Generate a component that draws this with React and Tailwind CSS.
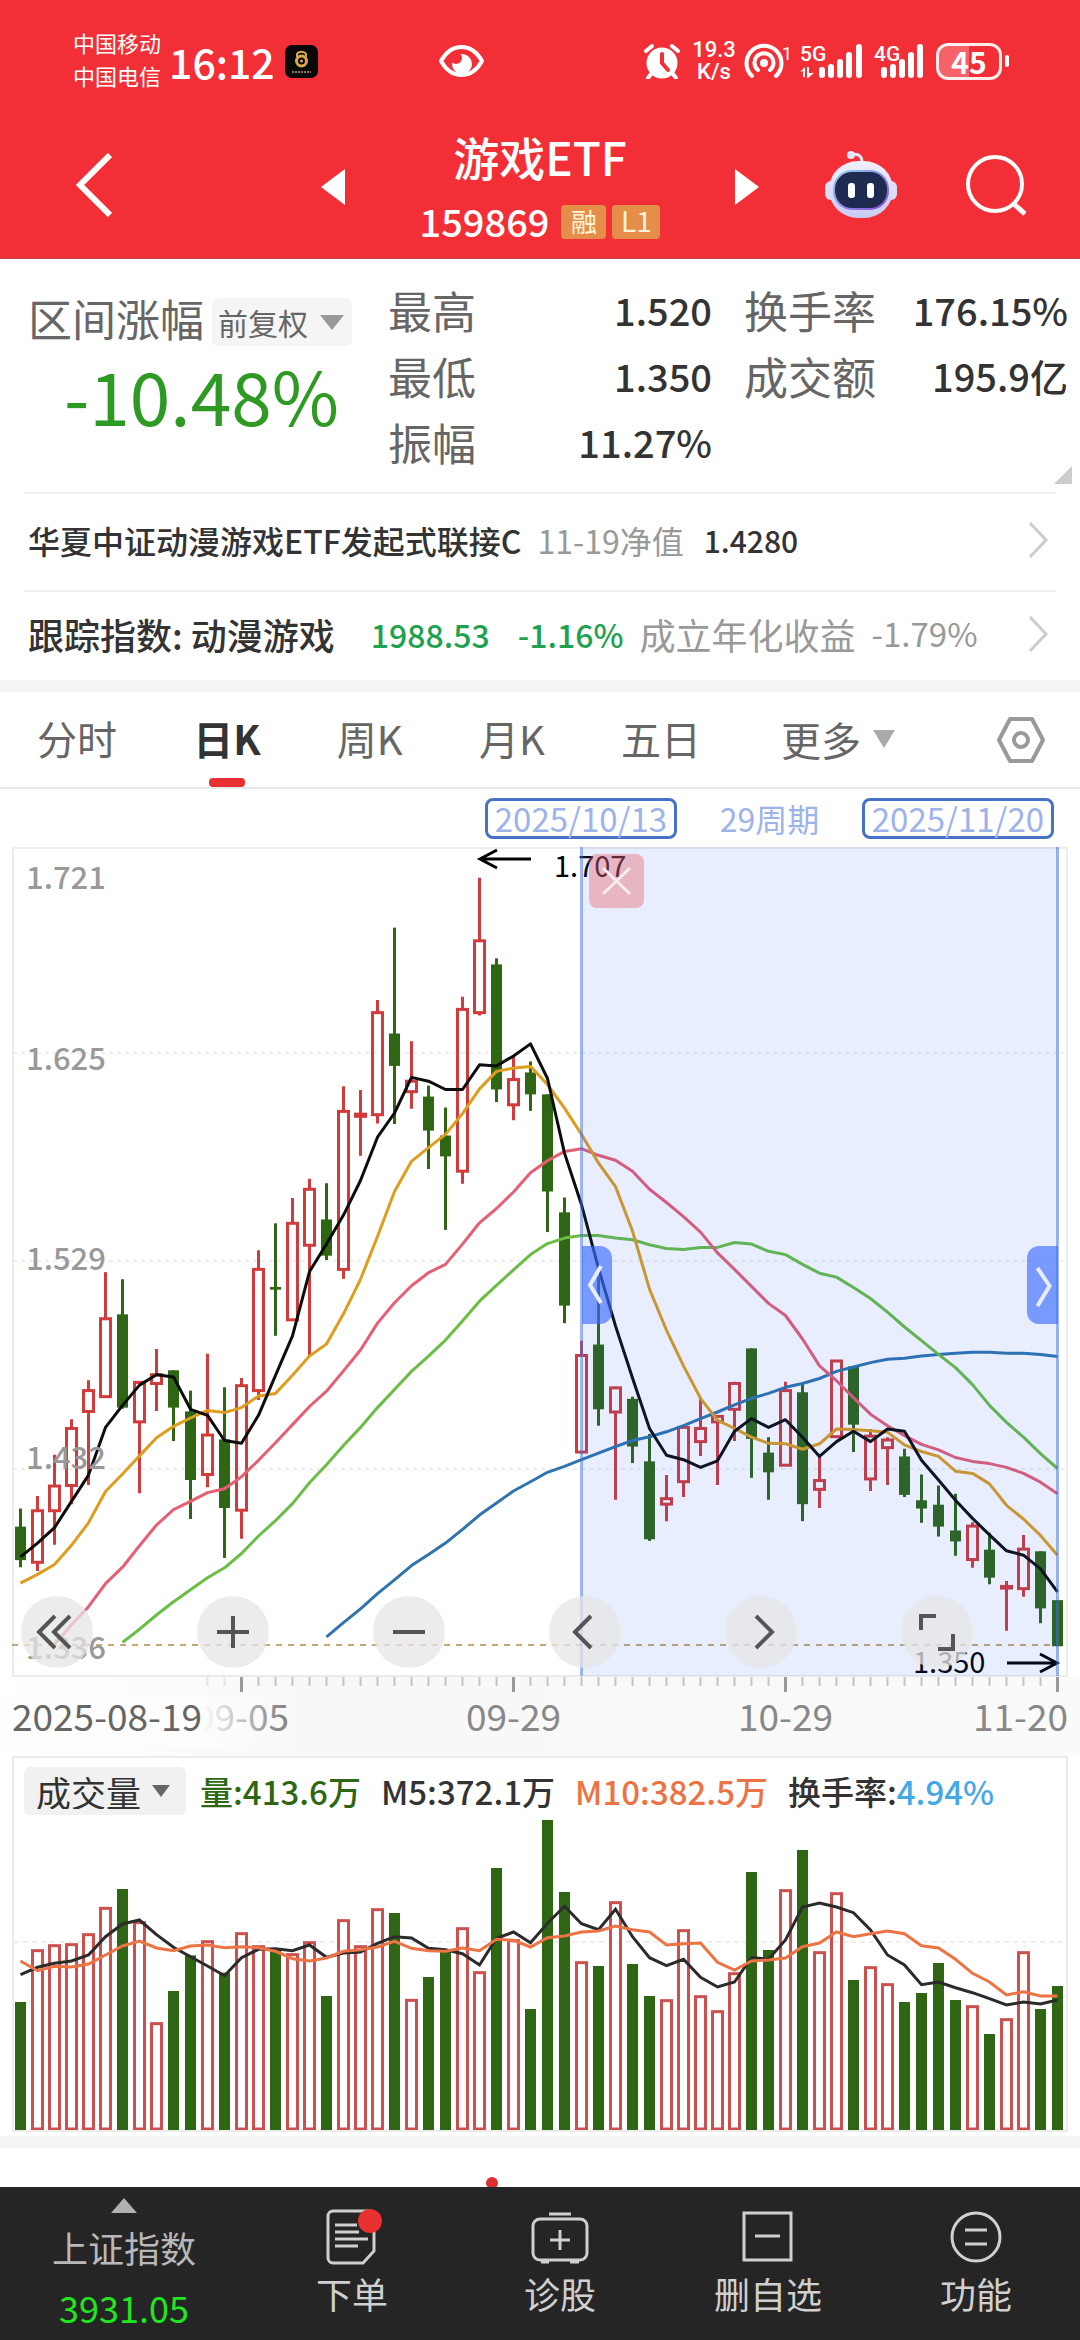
import React, { useState } from "react";

// [direction, high, body top, body bottom, low], measured down from the top of the plot
const candles = [
    ["d", 1218, 1251, 1312, 1325], ["u", 1195, 1222, 1316, 1332], ["u", 1120, 1177, 1222, 1284], ["u", 1055, 1072, 1176, 1210],
    ["u", 984, 1003, 1041, 1175], ["u", 787, 872, 1014, 1014], ["d", 800, 864, 1034, 1036], ["u", 986, 988, 1060, 1190],
    ["u", 927, 974, 990, 1040], ["d", 966, 966, 1034, 1095], ["d", 1003, 1041, 1166, 1237], ["u", 936, 1084, 1156, 1179],
    ["d", 997, 1092, 1217, 1308], ["u", 980, 994, 1221, 1273], ["u", 747, 782, 1003, 1020], ["d", 698, 814, 819, 903],
    ["u", 652, 698, 874, 876], ["u", 617, 636, 738, 938], ["d", 625, 691, 757, 765], ["u", 448, 494, 782, 799],
    ["u", 455, 499, 503, 575], ["u", 291, 314, 500, 516], ["d", 159, 352, 411, 517], ["u", 366, 439, 458, 489],
    ["d", 447, 467, 529, 599], ["d", 487, 538, 576, 710], ["u", 285, 308, 603, 626], ["u", 68, 183, 314, 319],
    ["d", 215, 226, 454, 477], ["u", 394, 436, 482, 510], ["d", 403, 423, 463, 493], ["d", 463, 463, 640, 714],
    ["d", 651, 678, 848, 880], ["u", 912, 939, 1115, 1117], ["d", 795, 919, 1037, 1067], ["u", 996, 998, 1042, 1202],
    ["d", 1014, 1018, 1105, 1135], ["d", 1082, 1132, 1274, 1277], ["u", 1157, 1200, 1210, 1241], ["u", 1068, 1070, 1169, 1197],
    ["u", 1016, 1072, 1096, 1122], ["u", 1048, 1050, 1060, 1175], ["u", 987, 990, 1037, 1095], ["d", 926, 926, 1091, 1162],
    ["d", 1088, 1116, 1152, 1202], ["u", 987, 1003, 1139, 1140], ["d", 991, 1006, 1210, 1241], ["u", 1122, 1167, 1183, 1217],
    ["u", 947, 949, 1087, 1088], ["d", 958, 959, 1065, 1115], ["u", 1073, 1086, 1164, 1186], ["u", 1088, 1093, 1107, 1175],
    ["d", 1109, 1123, 1193, 1197], ["d", 1156, 1203, 1218, 1244], ["d", 1176, 1211, 1251, 1269], ["d", 1191, 1258, 1278, 1304],
    ["u", 1243, 1250, 1311, 1326], ["d", 1262, 1293, 1344, 1356], ["u", 1350, 1360, 1363, 1441], ["u", 1266, 1292, 1364, 1379],
    ["d", 1296, 1296, 1400, 1427], ["d", 1385, 1385, 1469, 1469],
];

const averages = [
    {
        color: "#2f74ae", start: 18,
        values: [1452, 1426, 1401, 1373, 1348, 1322, 1302, 1281, 1256, 1230, 1208, 1186, 1169, 1152, 1141, 1129, 1117, 1105, 1094, 1087, 1078, 1067, 1054, 1042, 1029, 1017, 1008, 997, 990, 981, 968, 960, 952, 946, 944, 940, 937, 935, 933, 933, 935, 935, 937, 941],
    },
    {
        color: "#6abd45", start: 6,
        values: [1462, 1438, 1412, 1388, 1366, 1344, 1326, 1300, 1268, 1240, 1209, 1171, 1138, 1103, 1070, 1034, 1001, 968, 940, 911, 876, 840, 811, 783, 755, 735, 725, 720, 720, 725, 728, 737, 744, 746, 742, 742, 733, 736, 749, 755, 773, 789, 796, 815, 835, 860, 887, 912, 937, 961, 992, 1030, 1061, 1088, 1118, 1145],
    },
    {
        color: "#e65f74", start: 2,
        values: [1466, 1430, 1397, 1355, 1325, 1286, 1248, 1220, 1205, 1189, 1182, 1160, 1130, 1098, 1065, 1032, 1004, 967, 929, 880, 843, 812, 788, 773, 736, 697, 671, 641, 606, 584, 567, 562, 574, 583, 603, 636, 660, 686, 714, 752, 782, 813, 844, 866, 909, 958, 985, 1016, 1046, 1067, 1085, 1101, 1111, 1125, 1132, 1136, 1143, 1154, 1170, 1191],
    },
    {
        color: "#dd9d1f", start: 0,
        values: [1354, 1338, 1320, 1285, 1244, 1187, 1155, 1122, 1089, 1068, 1053, 1039, 1043, 1034, 1013, 1008, 975, 940, 918, 863, 800, 722, 640, 585, 560, 536, 498, 453, 421, 415, 412, 445, 488, 536, 588, 631, 712, 818, 893, 958, 1017, 1057, 1072, 1088, 1099, 1100, 1110, 1100, 1073, 1074, 1076, 1079, 1102, 1114, 1123, 1150, 1154, 1173, 1212, 1237, 1267, 1303],
    },
    {
        color: "#0d0d0d", start: 0,
        values: [1306, 1281, 1253, 1205, 1157, 1070, 1030, 993, 974, 978, 1037, 1048, 1094, 1099, 1048, 975, 903, 786, 736, 683, 620, 541, 497, 432, 439, 454, 454, 409, 411, 393, 371, 434, 570, 664, 780, 885, 980, 1072, 1121, 1129, 1143, 1131, 1077, 1054, 1070, 1056, 1088, 1123, 1096, 1077, 1096, 1073, 1077, 1130, 1166, 1203, 1236, 1266, 1295, 1303, 1328, 1370],
    },
];

const volumes = [666, 509, 494, 491, 461, 382, 327, 425, 728, 633, 526, 482, 578, 458, 497, 509, 521, 485, 648, 419, 497, 386, 399, 658, 591, 513, 443, 575, 264, 479, 687, 120, 336, 545, 558, 365, 552, 648, 659, 449, 647, 692, 578, 276, 510, 329, 210, 515, 338, 600, 560, 611, 666, 639, 549, 660, 677, 762, 716, 515, 687, 618];
const volumeM5 = [584, 562, 550, 543, 525, 470, 432, 420, 464, 502, 530, 558, 587, 533, 508, 506, 512, 495, 532, 519, 516, 490, 470, 474, 505, 509, 521, 555, 475, 456, 488, 430, 379, 431, 449, 388, 470, 533, 557, 538, 592, 621, 606, 533, 538, 480, 381, 369, 381, 398, 450, 525, 555, 614, 606, 623, 638, 656, 675, 666, 672, 660];
const volumeM10 = [543, 572, 559, 561, 552, 525, 498, 483, 504, 512, 498, 495, 503, 500, 503, 514, 536, 543, 534, 514, 509, 501, 484, 505, 512, 514, 504, 512, 478, 481, 501, 473, 468, 456, 453, 438, 449, 456, 495, 491, 489, 547, 570, 543, 540, 534, 500, 489, 456, 470, 461, 453, 461, 497, 504, 538, 580, 606, 645, 635, 648, 648];

const UP = "#d23b3b";
const DOWN = "#2f6614";

const xAt = (i) => 20.5 + i * 17;
const priceY = (v) => (v - 12) / 1.823;
const volumeY = (v) => v / 3 - 36;

const toPoints = (values, y, start = 0) =>
    values.map((v, i) => `${xAt(i + start)},${y(v).toFixed(1)}`).join(" ");

const Dropdown = ({ label, options, className, arrowClass }) => (
    <span className="relative inline-flex items-center">
        <select aria-label={label} className={`appearance-none outline-none ${className}`}>
            {options.map((o) => <option key={o}>{o}</option>)}
        </select>
        <svg className={`absolute pointer-events-none ${arrowClass}`} viewBox="0 0 20 14" preserveAspectRatio="none" fill="currentColor">
            <path d="M0 0h20L10 14z" />
        </svg>
    </span>
);

const Signal = ({ name, bars, arrows, width }) => (
    <svg width={width} height="40" viewBox={`0 0 ${width} 40`} fill="white">
        <text x="0" y="20" fontSize="21" fontWeight="500" fontFamily="Roboto, sans-serif">{name}</text>
        {arrows && <path d="M0 31l5-5v10H3v-6zM7 26h2v6h5l-6 5h-1z" />}
        {bars.map(([x, h]) => <rect key={x} x={x} y={37 - h} width="6" height={h} rx="3" />)}
    </svg>
);

const StatusBar = () => (
    <div className="flex items-center h-[122px] mb-0.5 pl-[73px] pr-[71px] text-white">
        <div className="pb-1 text-[22px] leading-[33px]">
            <p>中国移动</p>
            <p>中国电信</p>
        </div>
        <p className="ml-2 text-[41px] leading-[48px] font-medium">16:12</p>
        <svg className="ml-2.5 w-[33px] h-[33px]" viewBox="0 0 33 33">
            <rect width="33" height="33" rx="7" fill="#080808" />
            <path d="M12 12V9a5 4 0 0 1 9 0v3" fill="none" stroke="#d6a84e" strokeWidth="2" />
            <circle cx="16.500" cy="16" r="5" fill="none" stroke="#d6a84e" strokeWidth="3" />
            <circle cx="16.500" cy="16" r="1.500" fill="#d6a84e" />
            <path d="M7 27h19" stroke="#8a7a58" strokeWidth="2" strokeDasharray="2 1" />
        </svg>
        <svg className="ml-30 w-[47px] h-8" viewBox="0 0 47 32" fill="none" stroke="white" strokeWidth="4">
            <path d="M3 16C8 7 15 2 23.500 2S39 7 44 16c-5 9-12 14-20.500 14S8 25 3 16z" strokeLinejoin="round" />
            <circle cx="24" cy="19" r="10" fill="white" stroke="none" />
            <circle cx="18" cy="13" r="6" fill="#f22f37" stroke="none" />
        </svg>
        <div className="flex items-center ml-auto">
            <svg className="w-9 h-9" viewBox="0 0 36 36" fill="white">
                <circle cx="18" cy="20" r="15.500" />
                <path d="M2 8l6-5M34 8l-6-5M7 31l-3 4M29 31l3 4" stroke="white" strokeWidth="4" strokeLinecap="round" />
                <path d="M18 11v9l6 7" fill="none" stroke="#f22f37" strokeWidth="4" strokeLinecap="round" strokeLinejoin="round" />
            </svg>
            <div className="ml-3 w-11 text-center font-['Roboto',sans-serif] text-[22px] leading-[22px] font-medium">
                <p>19.3</p>
                <p>K/s</p>
            </div>
            <svg className="ml-2 w-13 h-10" viewBox="0 0 52 40" fill="none" stroke="white" strokeWidth="4" strokeLinecap="round">
                <path d="M8 35a17.500 17.500 0 1 1 24 0" />
                <path d="M14 29a9.500 9.500 0 1 1 12 0" />
                <circle cx="20" cy="22" r="4" fill="white" stroke="none" />
                <text x="38" y="19" fontSize="18" fill="white" stroke="none" fontFamily="Roboto, sans-serif">1</text>
            </svg>
            <div className="flex ml-1 gap-[11px]">
                <Signal name="5G" arrows width={63} bars={[[19, 11], [28, 14], [37, 19], [46, 26], [56, 34]]} />
                <Signal name="4G" width={50} bars={[[7, 11], [16, 14], [25, 19], [34, 26], [43, 34]]} />
            </div>
            <div className="ml-3 w-[66px] h-[37px] rounded-xl border-[3px] border-white/90 text-center text-[30px] leading-[30px] font-bold bg-linear-to-r from-white/25 from-50% to-transparent to-50%">
                45
            </div>
            <span className="ml-[3px] w-1 h-3 rounded-full bg-white" />
        </div>
    </div>
);

const Robot = () => (
    <svg className="w-[72px] h-[68px]" viewBox="0 0 72 68">
        <defs>
            <linearGradient id="shell" x1="0" y1="0" x2="0" y2="1">
                <stop offset="0" stopColor="#f1effc" />
                <stop offset="1" stopColor="#c9cbf2" />
            </linearGradient>
            <linearGradient id="visor" x1="0" y1="0" x2="1" y2="1">
                <stop offset="0" stopColor="#8fd5ef" />
                <stop offset="1" stopColor="#8447dd" />
            </linearGradient>
        </defs>
        <path d="M26 4c7-2 11 1 11 7" fill="none" stroke="#e7e3f8" strokeWidth="3" />
        <circle cx="26" cy="4" r="4" fill="#e7e3f8" />
        <rect x="0" y="30" width="12" height="19" rx="6" fill="#dedff6" />
        <rect x="60" y="30" width="12" height="19" rx="6" fill="#dedff6" />
        <rect x="4" y="10" width="64" height="57" rx="29" fill="url(#shell)" />
        <rect x="8" y="19" width="56" height="40" rx="19" fill="url(#visor)" />
        <rect x="10" y="21" width="52" height="36" rx="17" fill="#1f2a50" />
        <rect x="23" y="32" width="7" height="15" rx="3" fill="white" />
        <rect x="42" y="32" width="7" height="15" rx="3" fill="white" />
    </svg>
);

const Header = () => (
    <header className="bg-[#f22f37]">
        <StatusBar />
        <div className="grid grid-cols-[1fr_438px_1fr] h-[135px] text-white border-b border-[#b54a50]">
            <div className="flex items-center h-[122px] pl-[76px]">
                <button aria-label="返回">
                    <svg className="w-9 h-16" viewBox="0 0 36 64" fill="none" stroke="white" strokeWidth="6"><path d="M34 2L4 32l30 30" /></svg>
                </button>
            </div>
            <div className="flex justify-between">
                <button aria-label="上一只" className="h-[126px]">
                    <svg className="w-6 h-9" viewBox="0 0 24 36" fill="white"><path d="M24 0v36L0 18z" /></svg>
                </button>
                <div className="text-center">
                    <h1 className="text-[46px] leading-[64px] font-medium">游戏ETF</h1>
                    <div className="flex items-center gap-1.5 h-[68px]">
                        <span className="mr-1.5 pb-0.5 text-[38px] leading-none font-medium">159869</span>
                        <span className="w-[45px] h-[34px] rounded bg-[#e48e4a] text-[#fff6da] text-[26px] leading-[31px]">融</span>
                        <span className="w-12 h-[34px] rounded bg-[#e48e4a] text-[#fff6da] text-[28px] leading-[31px]">L1</span>
                    </div>
                </div>
                <button aria-label="下一只" className="h-[126px]">
                    <svg className="w-6 h-9" viewBox="0 0 24 36" fill="white"><path d="M0 0v36l24-18z" /></svg>
                </button>
            </div>
            <div className="flex items-center justify-between h-[122px] pl-[66px] pr-[54px]">
                <button aria-label="智能助手"><Robot /></button>
                <button aria-label="搜索">
                    <svg className="w-[60px] h-[62px]" viewBox="0 0 60 62" fill="none" stroke="white" strokeWidth="4">
                        <circle cx="29" cy="30" r="27" />
                        <path d="M48 50l11 10" strokeWidth="5" />
                    </svg>
                </button>
            </div>
        </div>
    </header>
);

const Stat = ({ name, value }) => (
    <div className="flex justify-between items-center h-[66px]">
        <dt className="text-[44px] leading-none text-[#666]">{name}</dt>
        <dd className="text-[38px] leading-none font-medium text-[#333]">{value}</dd>
    </div>
);

const Summary = () => (
    <section className="relative flex h-[233px] pl-7 pr-3 pt-[18px]">
        <div className="w-[360px] pt-[18px]">
            <div className="flex items-center gap-2 h-[54px]">
                <h2 className="pb-2 text-[44px] leading-none text-[#666]">区间涨幅</h2>
                <Dropdown label="复权方式" options={["前复权", "后复权", "不复权"]}
                    className="w-[140px] h-12 pl-1.5 rounded-md bg-[#f5f5f5] text-[30px] text-[#666]"
                    arrowClass="right-2 w-6 h-[15px] text-[#999]" />
            </div>
            <p className="mt-1.5 pl-9 text-[73px] leading-[78px] text-[#2f9a23]">-10.48%</p>
        </div>
        <div className="flex-1 flex gap-8">
            <dl className="flex-1">
                <Stat name="最高" value="1.520" />
                <Stat name="最低" value="1.350" />
                <Stat name="振幅" value="11.27%" />
            </dl>
            <dl className="flex-1">
                <Stat name="换手率" value="176.15%" />
                <Stat name="成交额" value="195.9亿" />
            </dl>
        </div>
        <svg className="absolute right-2 bottom-2 w-[18px] h-[18px]" viewBox="0 0 18 18"><path d="M18 0v18H0z" fill="#ccc" /></svg>
    </section>
);

const LinkRow = ({ children }) => (
    <a href="#" className="flex items-center mx-6 pl-1 pr-2 pb-1 border-t-2 border-[#eee] whitespace-nowrap">
        {children}
        <svg className="ml-auto w-5 h-9" viewBox="0 0 20 36" fill="none" stroke="#ccc" strokeWidth="3"><path d="M2 1l16 17L2 35" /></svg>
    </a>
);

const tabs = ["分时", "日K", "周K", "月K", "五日"];

const Tabs = () => {
    const [active, setActive] = useState("日K");

    return (
        <nav className="flex items-center h-[97px] pl-[37px] pr-[35px] border-b-2 border-[#e8e8e8] text-[40px] text-[#666]">
            <div className="flex flex-1 justify-between max-w-[664px] h-full">
                {tabs.map((t) => (
                    <button key={t} onClick={() => setActive(t)}
                        className={`relative h-full pb-1 cursor-pointer ${t === active ? "font-bold text-[#333]" : ""}`}>
                        {t}
                        {t === active && <span className="absolute bottom-0 left-1/2 -ml-[18px] w-9 h-[9px] rounded bg-[#e83030]" />}
                    </button>
                ))}
            </div>
            <div className="ml-20 pb-0.5">
                <Dropdown label="更多周期" options={["更多"]} className="w-[114px]" arrowClass="right-0 w-[22px] h-[18px] text-[#aaa]" />
            </div>
            <button aria-label="设置" className="ml-auto">
                <svg className="w-12 h-12" viewBox="0 0 48 48" fill="none" stroke="#999" strokeWidth="4" strokeLinejoin="round">
                    <path d="M13 3h22l11 21-11 21H13L2 24z" />
                    <circle cx="24" cy="24" r="7" />
                </svg>
            </button>
        </nav>
    );
};

const RangeBar = () => (
    <div className="flex items-center justify-end h-[58px] pr-[26px] text-[33px] leading-none text-[#9db3ea]">
        <button className="w-[192px] h-[41px] rounded-lg border-[3px] border-[#4672c8] leading-[33px]">2025/10/13</button>
        <span className="w-[185px] text-center text-[32px]">29周期</span>
        <button className="w-[192px] h-[41px] rounded-lg border-[3px] border-[#4672c8] leading-[33px]">2025/11/20</button>
    </div>
);

const gridLines = [206, 414, 622];
const priceLabels = [["1.721", 42], ["1.625", 223], ["1.529", 423], ["1.432", 622], ["1.336", 812]];
const dateLabels = [["09-05", 13], ["09-29", 29], ["10-29", 45]];

const toolIcons = [
    { name: "更早", d: "M34 20L18 36l16 16M49 20L33 36l16 16" },
    { name: "放大", d: "M20 36h32M36 20v32" },
    { name: "缩小", d: "M20 36h32" },
    { name: "左移", d: "M42 20L26 36l16 16" },
    { name: "右移", d: "M31 20l16 16-16 16" },
    { name: "全屏", d: "M20 34V20h15M52 38v15H37" },
];

const Candle = ({ data, i }) => {
    const [dir, high, top, bottom, low] = data;
    const x = xAt(i);
    if (dir === "d") {
        return (
            <g fill={DOWN}>
                <rect x={x - 1.5} y={priceY(high)} width="3" height={priceY(low) - priceY(high)} />
                <rect x={x - 5.5} y={priceY(top)} width="11" height={priceY(bottom) - priceY(top)} />
            </g>
        );
    }
    return (
        <g stroke={UP} strokeWidth="3" fill="none">
            <path d={`M${x} ${priceY(high)}V${priceY(top)}M${x} ${priceY(bottom)}V${priceY(low)}`} />
            <rect x={x - 5} y={priceY(top)} width="10" height={priceY(bottom) - priceY(top)} />
        </g>
    );
};

const PriceChart = () => (
    <div className="relative">
        <svg className="block w-full" viewBox="0 0 1080 909" fontFamily="'Noto Sans CJK SC', sans-serif">
            <defs>
                <linearGradient id="axisBg" x1="0" y1="0" x2="1" y2="0">
                    <stop offset="0" stopColor="#fff" />
                    <stop offset="0.3" stopColor="#f8f8f8" />
                    <stop offset="1" stopColor="#fafafa" />
                </linearGradient>
                <linearGradient id="fade" x1="0" y1="0" x2="1" y2="0">
                    <stop offset="0.72" stopColor="#fdfdfd" />
                    <stop offset="1" stopColor="#fdfdfd" stopOpacity="0" />
                </linearGradient>
            </defs>
            <rect x="0" y="830" width="1080" height="79" fill="url(#axisBg)" />
            <rect x="13" y="1" width="1054" height="828" fill="#fff" stroke="#ececec" strokeWidth="2" />
            {gridLines.map((y) => (
                <path key={y} d={`M13 ${y}H1066`} stroke="#e0e0e0" strokeWidth="1" strokeDasharray="4 4" />
            ))}
            <path d="M12 798H1066" stroke="#c5a675" strokeWidth="2" strokeDasharray="6 6" />

            {candles.map((c, i) => <Candle key={i} data={c} i={i} />)}
            {averages.map((a) => (
                <polyline key={a.color} points={toPoints(a.values, priceY, a.start)} fill="none" stroke={a.color} strokeWidth="3" strokeLinejoin="round" />
            ))}

            <g fontSize="31" fontWeight="500" fill="#999">
                {priceLabels.map(([t, y]) => <text key={t} x="26" y={y}>{t}</text>)}
            </g>
            <g fontSize="29" fill="#000">
                <text x="554" y="30">1.707</text>
                <text x="913" y="826">1.350</text>
            </g>
            <g fill="none" stroke="#000" strokeWidth="3">
                <path d="M531 12H480M497 3L480 12l17 9" />
                <path d="M1007 816h50M1040 807l17 9-17 9" />
            </g>

            <rect x="582" y="0" width="476" height="829" fill="#1e55fa" fillOpacity="0.1" />
            <path d="M581.500 0V829M1057.500 0V829" stroke="#4070e0" strokeOpacity="0.5" strokeWidth="3" />

            {candles.map((_, i) => {
                const major = i % 16 === 13;
                return i >= 11 && (
                    <path key={i} d={`M${xAt(i)} 830v${major ? 15 : 9}`} stroke={major ? "#999" : "#c4c4c4"} strokeOpacity={i < 13 ? 0.4 : 1} strokeWidth={major ? 3 : 2} />
                );
            })}
            <g fontSize="37" fill="#888">
                {dateLabels.map(([t, i]) => <text key={t} x={xAt(i)} y="884" textAnchor="middle">{t}</text>)}
                <text x="1068" y="884" textAnchor="end">11-20</text>
                <rect x="0" y="850" width="280" height="50" fill="url(#fade)" />
                <text x="12" y="884" fill="#666">2025-08-19</text>
            </g>
        </svg>

        <button aria-label="关闭区间统计" className="absolute left-[589px] top-[7px] w-[55px] h-[54px] rounded-lg bg-[#e8606c]/40">
            <svg className="w-full h-full" viewBox="0 0 55 54" fill="none" stroke="#f8eeee" strokeWidth="3"><path d="M14 14l27 26M41 14L14 40" /></svg>
        </button>
        <button aria-label="区间起点" className="absolute left-[582px] top-[399px] w-[30px] h-[78px] rounded-r-xl bg-[#3c6cff]/65">
            <svg className="w-full h-full" viewBox="0 0 30 78" fill="none" stroke="#e8eeff" strokeWidth="4"><path d="M19 20L8 39l11 18" /></svg>
        </button>
        <button aria-label="区间终点" className="absolute right-[22px] top-[399px] w-[31px] h-[78px] rounded-l-xl bg-[#3c6cff]/65">
            <svg className="w-full h-full" viewBox="0 0 30 78" fill="none" stroke="#e8eeff" strokeWidth="4"><path d="M10 22l12 18-12 20" /></svg>
        </button>

        <div className="absolute left-[21px] top-[749px] flex gap-[104px]">
            {toolIcons.map((t) => (
                <button key={t.name} aria-label={t.name} className="w-[72px] h-[72px] rounded-full bg-[#e6e6e6]/75">
                    <svg viewBox="0 0 72 72" fill="none" stroke="#555" strokeWidth="4"><path d={t.d} /></svg>
                </button>
            ))}
        </div>
    </div>
);

const VolumeChart = () => (
    <section className="mx-3 mb-1 border-2 border-[#ececec]">
        <div className="flex items-center gap-5 h-[58px] pt-2 pl-2.5 text-[33px] leading-none font-medium whitespace-nowrap text-[#333]">
            <Dropdown label="指标" options={["成交量", "MACD", "KDJ"]}
                className="w-[162px] h-12 pl-3 rounded-md bg-[#f1f1f1] text-[35px] font-normal"
                arrowClass="right-4 w-[18px] h-3 text-[#666]" />
            <span className="-ml-1.5 text-[#2f6614]">量:413.6万</span>
            <span>M5:372.1万</span>
            <span className="text-[#ec7444]">M10:382.5万</span>
            <span>换手率:<span className="text-[#45a8e6]">4.94%</span></span>
        </div>
        <svg className="block w-full" viewBox="14 0 1052 314">
            <path d="M14 126H1066" stroke="#ddd" strokeWidth="1" strokeDasharray="5 4" />
            {volumes.map((v, i) => {
                const y = volumeY(v);
                return candles[i][0] === "d"
                    ? <rect key={i} x={xAt(i) - 5.5} y={y} width="11" height={314 - y} fill={DOWN} />
                    : <rect key={i} x={xAt(i) - 5} y={y + 1} width="10" height={312 - y} fill="none" stroke="#cc5050" strokeWidth="3" />;
            })}
            <polyline points={toPoints(volumeM5, volumeY)} fill="none" stroke="#2b2b2b" strokeWidth="3" />
            <polyline points={toPoints(volumeM10, volumeY)} fill="none" stroke="#ec7444" strokeWidth="3" />
        </svg>
    </section>
);

const NavItem = ({ label, dot, children }) => (
    <button className="flex-1 flex flex-col items-center pt-[18px]">
        <span className="relative">
            <svg className="w-[60px] h-[60px]" viewBox="0 0 60 60" fill="none" stroke="#d0d0d0" strokeWidth="3">{children}</svg>
            {dot && <span className="absolute right-0 top-1 w-6 h-6 rounded-full bg-[#e83030]" />}
        </span>
        <span className="mt-2.5 text-[36px] leading-9">{label}</span>
    </button>
);

const BottomNav = () => (
    <nav className="mt-auto flex h-[153px] bg-[#252525] text-[#d0d0d0]">
        <button className="w-[248px] flex flex-col items-center pt-[11px]">
            <svg className="w-[26px] h-[15px]" viewBox="0 0 26 15" fill="#b0b0b0"><path d="M13 0l13 15H0z" /></svg>
            <span className="mt-3.5 text-[36px] leading-10 text-[#b8b8b8]">上证指数</span>
            <span className="mt-5 text-[36px] leading-10 text-[#1fe61f]">3931.05</span>
        </button>
        <NavItem label="下单" dot>
            <path d="M11 6h37a4 4 0 0 1 4 4v36L41 58H11a5 5 0 0 1-5-5V11a5 5 0 0 1 5-5z" />
            <path d="M13 20h22M13 27h24M13 34h33M13 41h23" />
        </NavItem>
        <NavItem label="诊股">
            <rect x="3" y="14" width="54" height="41" rx="7" />
            <path d="M19 9h22M30 25v20M20 35h20M11 57h8M40 57h9" />
        </NavItem>
        <NavItem label="删自选">
            <rect x="6" y="8" width="47" height="47" />
            <path d="M17 31h25" />
        </NavItem>
        <NavItem label="功能">
            <circle cx="30" cy="32" r="24" />
            <path d="M19 25h22M19 39h22" />
        </NavItem>
    </nav>
);

const App = () => (
    <div className="flex flex-col min-h-screen bg-white font-['Noto_Sans_CJK_SC',sans-serif]">
        <Header />
        <Summary />
        <LinkRow>
            <span className="text-[32px] leading-[92px] font-medium text-[#333]">华夏中证动漫游戏ETF发起式联接C</span>
            <span className="ml-4 text-[32px] text-[#999]">11-19净值</span>
            <span className="ml-5 text-[30px] font-medium text-[#333]">1.4280</span>
        </LinkRow>
        <LinkRow>
            <span className="text-[36px] leading-[84px] font-medium text-[#333]">跟踪指数: 动漫游戏</span>
            <span className="ml-9 text-[32px] font-medium text-[#1fa24f]">1988.53</span>
            <span className="ml-7 text-[32px] font-medium text-[#1fa24f]">-1.16%</span>
            <span className="ml-4 text-[36px] text-[#999]">成立年化收益</span>
            <span className="ml-4 text-[33px] text-[#999]">-1.79%</span>
        </LinkRow>
        <div className="h-3 bg-[#f4f4f4]" />
        <Tabs />
        <RangeBar />
        <PriceChart />
        <VolumeChart />
        <div className="h-3 bg-[#f4f4f4]" />
        <div className="flex h-[39px] pl-[486px] pt-[29px] overflow-hidden">
            <span className="w-3 h-3 shrink-0 rounded-full bg-[#dc3030]" />
        </div>
        <BottomNav />
    </div>
);

export default App;
